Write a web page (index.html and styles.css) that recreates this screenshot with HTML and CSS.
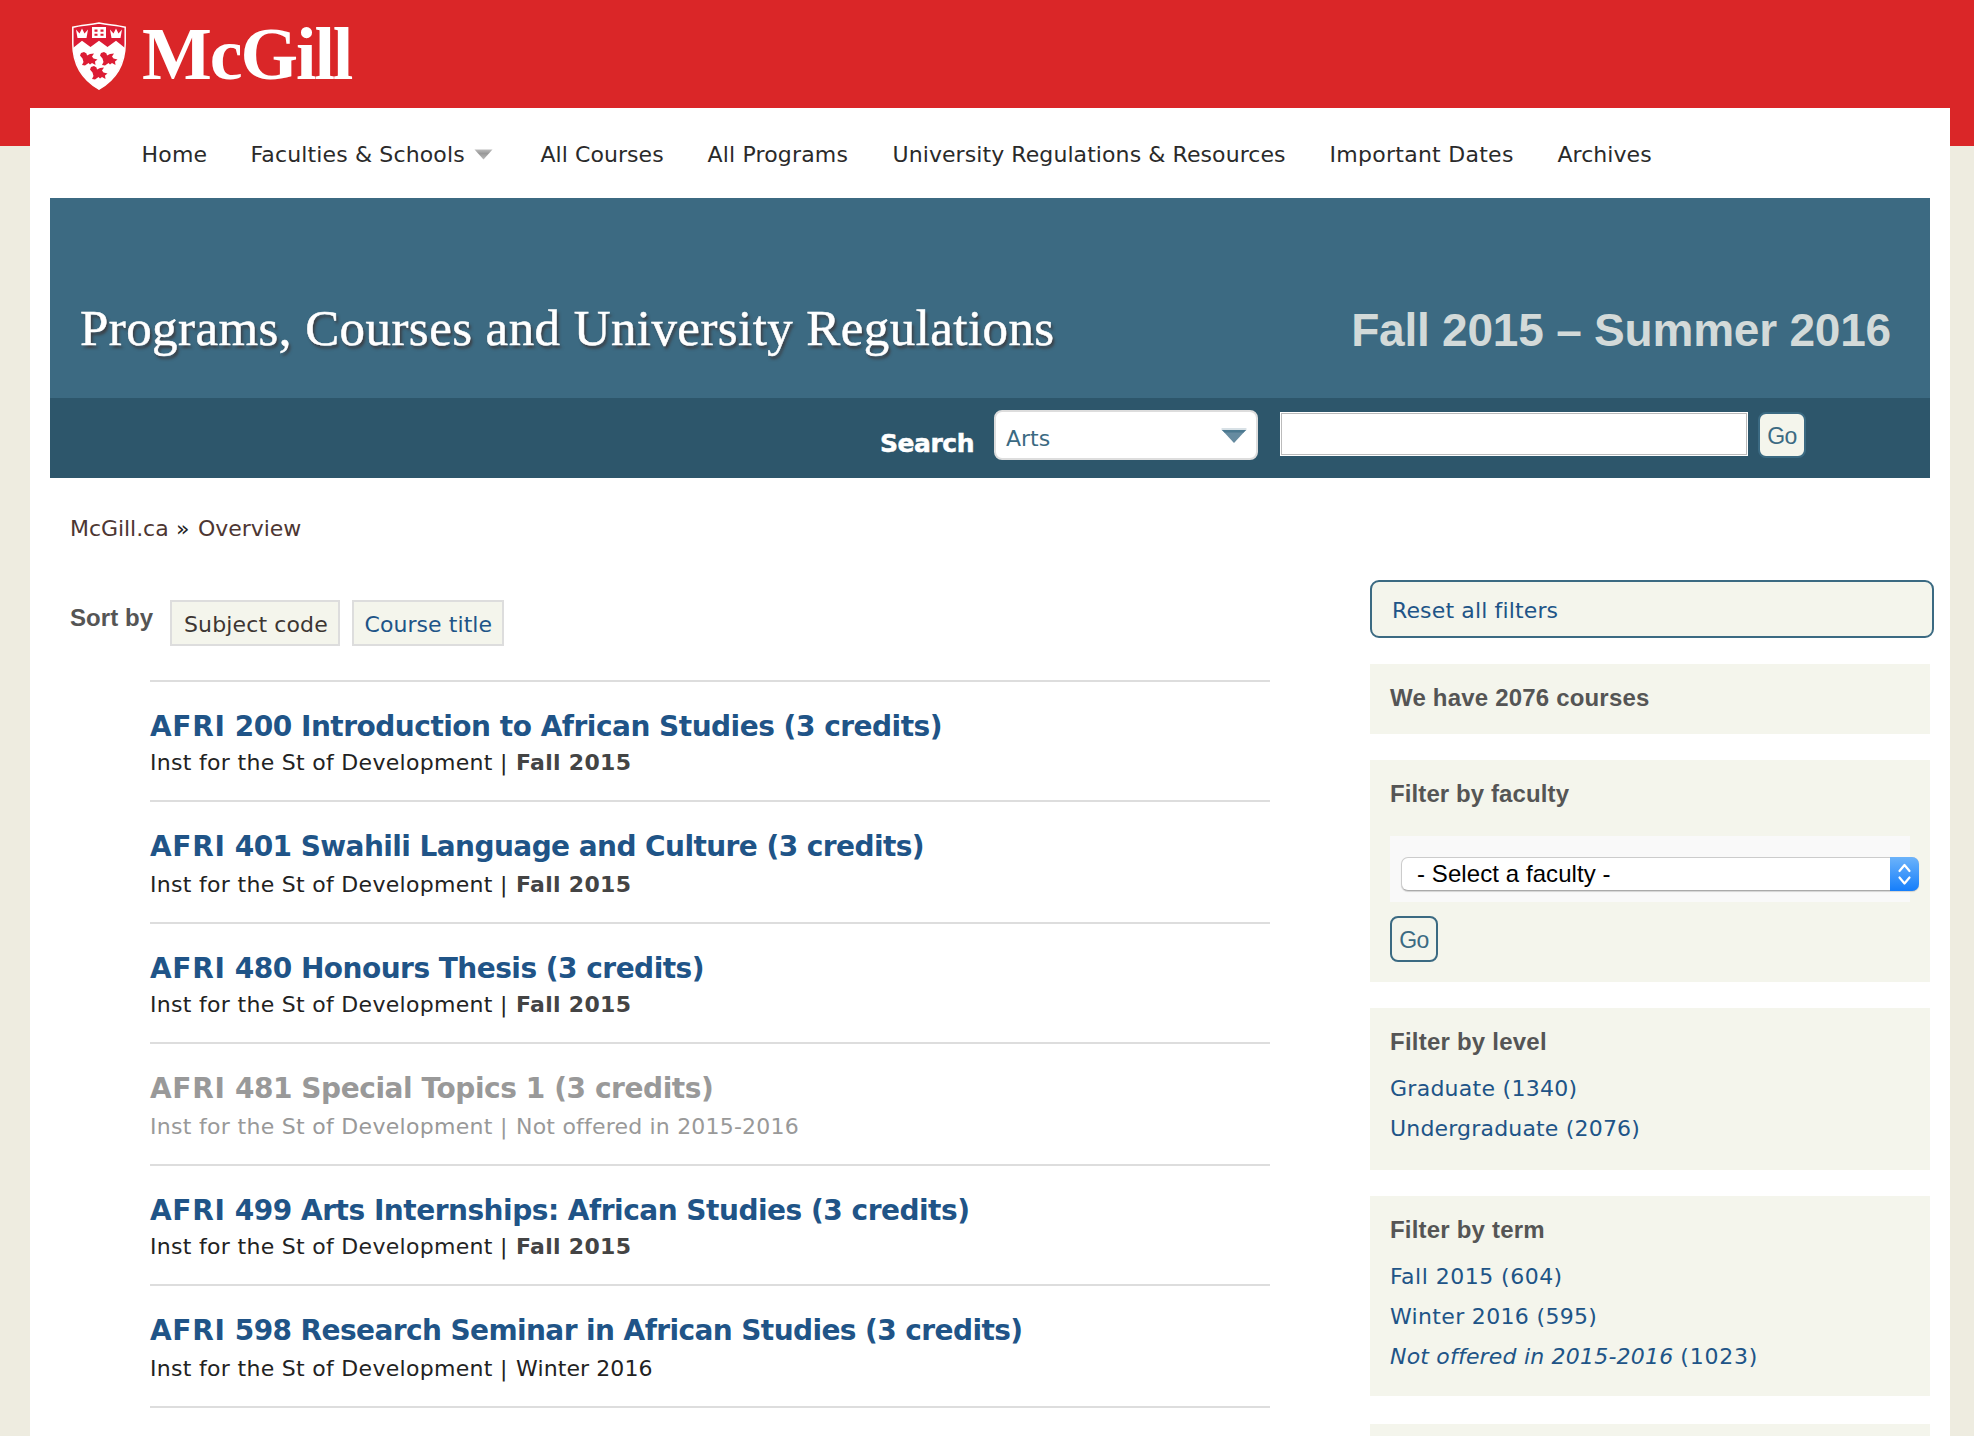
FILE: index.html
```html
<!DOCTYPE html>
<html lang="en">
<head>
<meta charset="utf-8">
<title>Programs, Courses and University Regulations</title>
<link rel="stylesheet" href="styles.css">
</head>
<body>
<header class="masthead">
  <svg class="crest" width="54" height="68" viewBox="0 0 54 68">
    <path d="M.8 5.200C9 3.200 17 3 27 1c10 2 18 2.200 26.200 4.200V22C53 43 43 58 27 67.200 11 58 1 43 .8 22z" fill="#dc1c34" stroke="#fff" stroke-width="1.500"/>
    <path d="M1 26l9-7.300 8.500 6.300L27 18.700l8.500 6.300 8.500-6.300 9 7.300C51.500 44 42 58.500 27 67.500 12 58.500 2.500 44 1 26z" fill="#fff"/>
    <path d="M4 7.500l3.500 4 2.500-5 2.500 5 3.500-4-1.500 8.500h-9zM38 7.500l3.500 4 2.500-5 2.500 5 3.500-4-1.500 8.500h-9z" fill="#fff"/>
    <path d="M20 5h14v11H20z" fill="#fff"/>
    <path d="M22.500 7.500h3v2.300h-3zM28.500 7.500h3v2.300h-3zM22.500 11.800h3v2h-3zM28.500 11.800h3v2h-3z" fill="#dc1c34"/>
    <g fill="#dc1c34">
      <path id="martlet" d="M8 33.500l1-2.500 3-1 2.500 1.500.5 2 3-1.500 4-.5-2 3 1.500 2 4 1-2.500 2 .5 3.500-3.500-2-2 1.500-1.500-1.500-3.500 2.500-3-.5 1.500-3-1-3.500z"/>
      <use href="#martlet" x="20"/>
      <use href="#martlet" x="10" y="14"/>
    </g>
  </svg>
  <span class="wordmark">McGill</span>
</header>

<div class="page">
  <nav class="menu">
    <a class="home">Home</a>
    <a class="faculties">Faculties &amp; Schools<svg class="caret" width="19" height="11" viewBox="0 0 19 11"><defs><linearGradient id="cg" x2="0" y2="1"><stop stop-color="#bbb"/><stop offset=".4" stop-color="#999"/><stop offset="1" stop-color="#bbb"/></linearGradient></defs><path d="M.5.5h18l-9 10z" fill="url(#cg)"/></svg></a>
    <a class="courses">All Courses</a>
    <a class="programs">All Programs</a>
    <a class="regulations">University Regulations &amp; Resources</a>
    <a class="dates">Important Dates</a>
    <a class="archives">Archives</a>
  </nav>

  <section class="banner">
    <h1>Programs, Courses and University Regulations</h1>
    <p class="session">Fall 2015 – Summer 2016</p>
  </section>
  <form class="search">
    <label class="search-label">Search</label>
    <div class="scope">Arts<svg width="26" height="16" viewBox="0 0 26 16"><path d="M.5 0h25v2.500H.5z" fill="#3b6a82" opacity=".2"/><path d="M1 2h24L13 15z" fill="#668ba0"/><path d="M1 2h24l-2.500 2.500h-19z" fill="#4b7990"/></svg></div>
    <div class="query"></div>
    <div class="go go-search">Go</div>
  </form>

  <div class="crumbs"><a>McGill.ca</a><span>»</span><a>Overview</a></div>

  <div class="columns">
    <main class="results">
      <div class="sort">
        <strong>Sort by</strong>
        <span class="sort-option by-code">Subject code</span>
        <a class="sort-option by-title">Course title</a>
      </div>
      <ul class="courses-list">
        <li class="a200"><h4><span>AFRI</span> 200 Introduction to African Studies (3 credits)</h4><p>Inst for the St of Development | <b>Fall 2015</b></p></li>
        <li class="a401"><h4><span>AFRI</span> 401 Swahili Language and Culture (3 credits)</h4><p>Inst for the St of Development | <b>Fall 2015</b></p></li>
        <li class="a480"><h4><span>AFRI</span> 480 Honours Thesis (3 credits)</h4><p>Inst for the St of Development | <b>Fall 2015</b></p></li>
        <li class="a481 not-offered"><h4><span>AFRI</span> 481 Special Topics 1 (3 credits)</h4><p>Inst for the St of Development | <i>Not offered in 2015-2016</i></p></li>
        <li class="a499"><h4><span>AFRI</span> 499 Arts Internships: African Studies (3 credits)</h4><p>Inst for the St of Development | <b>Fall 2015</b></p></li>
        <li class="a598"><h4><span>AFRI</span> 598 Research Seminar in African Studies (3 credits)</h4><p>Inst for the St of Development | <i class="winter">Winter 2016</i></p></li>
        <li></li>
      </ul>
    </main>

    <aside class="filters">
      <a class="reset">Reset all filters</a>
      <section class="box count"><h3>We have 2076 courses</h3></section>
      <section class="box faculty">
        <h3>Filter by faculty</h3>
        <div class="select-wrap">
          <div class="select"><span>- Select a faculty -</span><i class="stepper"><svg width="29" height="34" viewBox="0 0 29 34"><path d="M9.500 14l5-6 5 6M9.500 20.500l5 6 5-6" fill="none" stroke="#fff" stroke-width="2.200" stroke-linecap="round" stroke-linejoin="round"/></svg></i></div>
        </div>
        <div class="go go-filter">Go</div>
      </section>
      <section class="box level">
        <h3>Filter by level</h3>
        <a class="graduate">Graduate (1340)</a>
        <a class="undergraduate">Undergraduate (2076)</a>
      </section>
      <section class="box term">
        <h3>Filter by term</h3>
        <a class="fall">Fall 2015 (604)</a>
        <a class="winter">Winter 2016 (595)</a>
        <a class="none"><em>Not offered in 2015-2016</em> <span>(1023)</span></a>
      </section>
      <section class="box next"></section>
    </aside>
  </div>
</div>
</body>
</html>
```
FILE: styles.css
```css
* { box-sizing: border-box; margin: 0; padding: 0; }

body {
  height: 1436px;
  overflow: hidden;
  background: linear-gradient(#da2628 146px, #eeece0 146px);
  font: 22px/32px "DejaVu Sans", sans-serif;
  color: #222;
  white-space: nowrap;
}

a { color: #205487; }

/* masthead */
.masthead { display: flex; height: 108px; padding: 22px 0 0 72px; }
.crest { flex: none; }
.wordmark {
  margin: 0 0 0 16px;
  font: bold 74px/64px "Liberation Serif", serif;
  letter-spacing: -2.1px;
  color: #fff;
}

.page { width: 1920px; height: 1328px; margin-left: 30px; padding: 0 20px; background: #fff; overflow: hidden; }

/* main menu */
.menu {
  display: grid;
  grid-template-columns: 109px 290px 167px 185px 437px 228px auto;
  height: 90px;
  padding-left: 91.500px;
  line-height: 94px;
}
.menu a { color: #2a2a2a; }
.home { letter-spacing: .2px; }
.faculties { letter-spacing: .14px; }
.caret { margin-left: 9px; vertical-align: 2px; }
.courses { letter-spacing: .06px; }
.programs { letter-spacing: .17px; }
.regulations { letter-spacing: .08px; }
.dates { letter-spacing: .27px; }
.archives { letter-spacing: .05px; }

/* banner */
.banner {
  display: flex;
  justify-content: space-between;
  height: 200px;
  padding: 95px 39px 0 30px;
  background: #3c6a82;
}
.banner h1 {
  font: 51px/70px "Liberation Serif", serif;
  letter-spacing: .42px;
  color: #fff;
  -webkit-text-stroke: .5px #fff;
  text-shadow: 2px 3px 3px rgba(60, 50, 50, .8);
}
.session {
  font: bold 46px/74px "Liberation Sans", sans-serif;
  letter-spacing: -.21px;
  color: #d3dad9;
}
.search { display: flex; height: 80px; padding-left: 830px; background: #2d566b; }
.search-label {
  width: 114px;
  margin-top: 30px;
  font: bold 25px/32px "DejaVu Sans", sans-serif;
  letter-spacing: -.47px;
  color: #fff;
  -webkit-text-stroke: .5px #fff;
}
.scope {
  display: flex;
  justify-content: space-between;
  width: 264px;
  height: 50px;
  margin-top: 12px;
  padding: 11px 9px 0 10px;
  border: 2px solid #ddd;
  border-radius: 8px;
  background: #fff;
  color: #3b6a82;
}
.scope svg { margin-top: 5px; }
.query {
  width: 468px;
  height: 44px;
  margin: 14px 0 0 22px;
  border: 1px solid #fff;
  outline: 1px solid #bbb;
  outline-offset: -2px;
  background: #fff;
}
.go {
  border: 2px solid #3b6a82;
  border-radius: 8px;
  font: 23px/42px "Liberation Sans", sans-serif;
  letter-spacing: -.5px;
  color: #3b6a82;
  text-align: center;
}
.go-search { width: 48px; height: 46px; margin: 14px 0 0 10px; background: #f4f5ec; line-height: 44px; }

/* breadcrumb */
.crumbs { display: flex; height: 102px; padding: 35px 0 0 20px; line-height: 32px; }
.crumbs a { color: #4d3632; letter-spacing: -.05px; }
.crumbs a:first-child { width: 106px; }
.crumbs span { width: 22px; }

.columns { display: flex; }
.results { flex: none; width: 1220px; padding-left: 20px; margin-right: 100px; }

/* sort bar */
.sort { display: flex; height: 100px; padding-top: 20px; }
.sort strong {
  width: 100px;
  margin-top: 2px;
  font: bold 24px/32px "Liberation Sans", sans-serif;
  letter-spacing: .05px;
  color: #555;
}
.sort-option { height: 46px; padding: 7px 0 0 12px; border: 2px solid #ddd; background: #f4f5ec; }
.by-code { width: 170px; color: #3c3632; letter-spacing: .13px; }
.by-title { width: 152px; margin-left: 12px; padding-left: 10.500px; letter-spacing: .07px; }

/* course list */
.courses-list { margin-left: 80px; list-style: none; }
.courses-list li { height: 120px; padding-top: 29px; border-top: 2px solid #ddd; }
.courses-list li:nth-child(even) { height: 122px; }
.courses-list h4 { font-size: 28px; line-height: 32px; color: #205487; }
.courses-list h4 span { letter-spacing: .7px; }
.courses-list p { margin-top: 4px; letter-spacing: .3px; }
.courses-list li:nth-child(even) p { margin-top: 6px; }
.courses-list b { margin-left: 1px; color: #444; letter-spacing: .3px; }
.courses-list i { margin-left: 1px; font-style: normal; letter-spacing: .2px; }
.courses-list .winter { letter-spacing: .1px; }
.a200 h4 { letter-spacing: -.5px; }
.a401 h4 { letter-spacing: -.57px; }
.a480 h4 { letter-spacing: -.52px; }
.a481 h4 { letter-spacing: -.43px; }
.a499 h4 { letter-spacing: -.49px; }
.a598 h4 { letter-spacing: -.59px; }
.courses-list .not-offered, .courses-list .not-offered h4 { color: #999; }

/* filters */
.filters { flex: none; width: 564px; }
.reset {
  display: block;
  width: 564px;
  height: 58px;
  margin-bottom: 26px;
  padding: 13px 0 0 20px;
  border: 2px solid #3b6a82;
  border-radius: 9px;
  background: #f4f5ec;
  letter-spacing: .14px;
}
.box { width: 560px; margin-bottom: 26px; padding: 18px 20px 0; background: #f4f5ec; }
.box h3 { font: bold 24px/32px "Liberation Sans", sans-serif; color: #555; }
.box a { display: block; line-height: 40px; }
.count { height: 70px; }
.count h3 { letter-spacing: .19px; }
.faculty { height: 222px; }
.faculty h3 { letter-spacing: .1px; }
.select-wrap { width: 520px; height: 66px; margin-top: 26px; padding: 21px 0 0 11px; background: #f9f9f9; }
.select {
  display: flex;
  justify-content: space-between;
  width: 518px;
  height: 34px;
  padding-left: 15px;
  border: 1px solid #ccc;
  border-bottom-color: #aaa;
  border-radius: 7px;
  background: #fff;
  box-shadow: 0 1px 1px rgba(0, 0, 0, .15);
  font: 24px/32px "Liberation Sans", sans-serif;
  letter-spacing: .08px;
  color: #000;
}
.stepper {
  width: 29px;
  height: 34px;
  margin: -1px -1px 0 0;
  border-radius: 0 7px 7px 0;
  background: linear-gradient(#6cb3fa, #157efb);
}
.stepper svg { display: block; }
.go-filter { width: 48px; height: 46px; margin-top: 14px; line-height: 45px; }
.level { height: 162px; }
.level h3 { letter-spacing: .23px; }
.term { height: 200px; margin-bottom: 28px; }
.term h3 { letter-spacing: .2px; }
.level h3, .term h3 { margin-bottom: 11px; }
.graduate { letter-spacing: .27px; }
.undergraduate { letter-spacing: .18px; }
.fall { letter-spacing: .48px; }
.box .winter { letter-spacing: .33px; }
.none em { letter-spacing: .2px; }
.none span { letter-spacing: .75px; }
.next { height: 60px; }
```
